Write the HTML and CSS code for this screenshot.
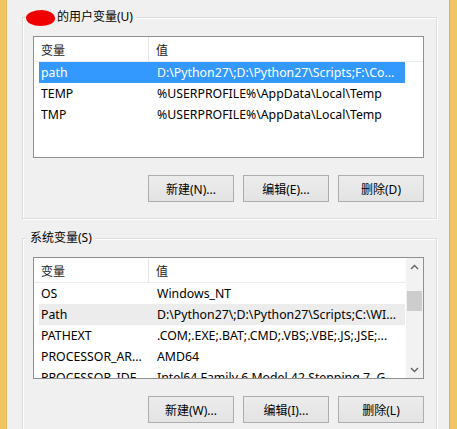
FILE: index.html
```html
<!DOCTYPE html>
<html lang="zh-CN">
<head>
<meta charset="utf-8">
<title>环境变量</title>
<link rel="stylesheet" href="styles.css">
</head>
<body>
<div class="window">
  <div class="edge edge-left"></div>
  <main class="content">
    <section class="group">
      <div class="legend"><span class="redact"></span>的用户变量(U)</div>
      <div class="list">
        <div class="list-main">
          <div class="header">
            <div class="hcol hcol-name">变量</div>
            <div class="hcol hcol-value">值</div>
          </div>
          <div class="row selected"><div class="cell cell-name">path</div><div class="cell cell-value">D:\Python27\;D:\Python27\Scripts;F:\Co...</div></div>
          <div class="row"><div class="cell cell-name">TEMP</div><div class="cell cell-value">%USERPROFILE%\AppData\Local\Temp</div></div>
          <div class="row"><div class="cell cell-name">TMP</div><div class="cell cell-value">%USERPROFILE%\AppData\Local\Temp</div></div>
        </div>
      </div>
      <div class="buttons">
        <button class="btn">新建(N)...</button>
        <button class="btn">编辑(E)...</button>
        <button class="btn">删除(D)</button>
      </div>
    </section>

    <section class="group group-system">
      <div class="legend">系统变量(S)</div>
      <div class="list">
        <div class="list-main">
          <div class="header">
            <div class="hcol hcol-name">变量</div>
            <div class="hcol hcol-value">值</div>
          </div>
          <div class="row"><div class="cell cell-name">OS</div><div class="cell cell-value">Windows_NT</div></div>
          <div class="row inactive"><div class="cell cell-name">Path</div><div class="cell cell-value">D:\Python27\;D:\Python27\Scripts;C:\WI...</div></div>
          <div class="row"><div class="cell cell-name">PATHEXT</div><div class="cell cell-value">.COM;.EXE;.BAT;.CMD;.VBS;.VBE;.JS;.JSE;...</div></div>
          <div class="row"><div class="cell cell-name">PROCESSOR_AR...</div><div class="cell cell-value">AMD64</div></div>
          <div class="row"><div class="cell cell-name">PROCESSOR_IDE...</div><div class="cell cell-value">Intel64 Family 6 Model 42 Stepping 7, G...</div></div>
        </div>
        <div class="scrollbar">
          <div class="arrow">
            <svg width="9" height="6" viewBox="0 0 9 6"><path d="M1 5 L4.5 1.5 L8 5" fill="none" stroke="#606060" stroke-width="1.4"/></svg>
          </div>
          <div class="track"><div class="thumb"></div></div>
          <div class="arrow">
            <svg width="9" height="6" viewBox="0 0 9 6"><path d="M1 1 L4.5 4.5 L8 1" fill="none" stroke="#606060" stroke-width="1.4"/></svg>
          </div>
        </div>
      </div>
      <div class="buttons">
        <button class="btn">新建(W)...</button>
        <button class="btn">编辑(I)...</button>
        <button class="btn">删除(L)</button>
      </div>
    </section>
  </main>
  <div class="edge edge-right"></div>
</div>
</body>
</html>
```

FILE: styles.css
```css
* { box-sizing: border-box; }

html, body {
  margin: 0;
  padding: 0;
  width: 457px;
  height: 429px;
  overflow: hidden;
  background: #f0f0f0;
  font-family: "Noto Sans", "Noto Sans CJK SC", sans-serif;
  font-size: 12px;
  color: #000;
}

.window {
  display: flex;
  height: 429px;
}

.edge {
  flex: none;
  background: #f1c563;
}
.edge-left {
  width: 7px;
  box-shadow: inset -1px 0 0 #e7b955;
}
.edge-right {
  width: 8px;
  box-shadow: inset 1px 0 0 #e3b24e;
}

.content {
  flex: 1;
  display: flex;
  flex-direction: column;
  padding: 17px 12px 0 15px;
  gap: 19px;
  min-width: 0;
}

.group {
  flex: none;
  display: flex;
  flex-direction: column;
  border: 1px solid #dcdcdc;
  box-shadow: inset 1px 1px 0 #fff, 1px 1px 0 #fff;
  padding: 0 12px 16px 10px;
}

.legend {
  align-self: flex-start;
  display: flex;
  align-items: center;
  height: 16px;
  line-height: 16px;
  margin: -9px 0 0 -7px;
  padding: 0 3px 0 4px;
  background: #f0f0f0;
  white-space: nowrap;
}

.redact {
  display: inline-block;
  width: 29px;
  height: 16px;
  margin: 1px 2px 0 -4px;
  background: #f00000;
  border-radius: 55% 45% 50% 50% / 50% 55% 45% 50%;
}

.list {
  margin-top: 11px;
  height: 122px;
  border: 1px solid #8f9091;
  background: #fff;
  display: flex;
  overflow: hidden;
}

.list-main {
  flex: 1;
  min-width: 0;
  display: flex;
  flex-direction: column;
}

.header {
  flex: none;
  display: flex;
  height: 25px;
  border-bottom: 1px solid #ececec;
  align-items: stretch;
}

.hcol {
  display: flex;
  align-items: center;
  padding-left: 7px;
  padding-top: 1px;
  color: #1a1a1a;
}
.hcol-name {
  width: 115px;
  border-right: 1px solid #e5e5e5;
}
.hcol-value {
  width: 256px;
}

.row {
  flex: none;
  display: flex;
  height: 21px;
  width: 366px;
  margin-left: 5px;
  align-items: center;
  white-space: nowrap;
}
.row.selected {
  background: #3399ff;
  color: #fff;
}
.row.inactive {
  background: #ececec;
}

.cell {
  overflow: hidden;
  font-size: 12.3px;
}
.cell-name {
  width: 110px;
  padding-left: 2px;
}
.cell-value {
  width: 256px;
  padding-left: 8px;
}

.scrollbar {
  flex: none;
  width: 17px;
  background: #f2f2f2;
  display: flex;
  flex-direction: column;
}
.arrow {
  flex: none;
  height: 17px;
  display: flex;
  align-items: center;
  justify-content: center;
}
.track {
  flex: 1;
  padding: 16px 1px 0;
}
.thumb {
  height: 20px;
  background: #cdcdcd;
}

.buttons {
  margin-top: 17px;
  display: flex;
  justify-content: flex-end;
  gap: 9px;
}

.btn {
  width: 86px;
  height: 27px;
  margin: 0;
  padding: 0;
  border: 1px solid #adadad;
  background: linear-gradient(#ececec, #e3e3e3);
  font: inherit;
  color: #000;
}
```
